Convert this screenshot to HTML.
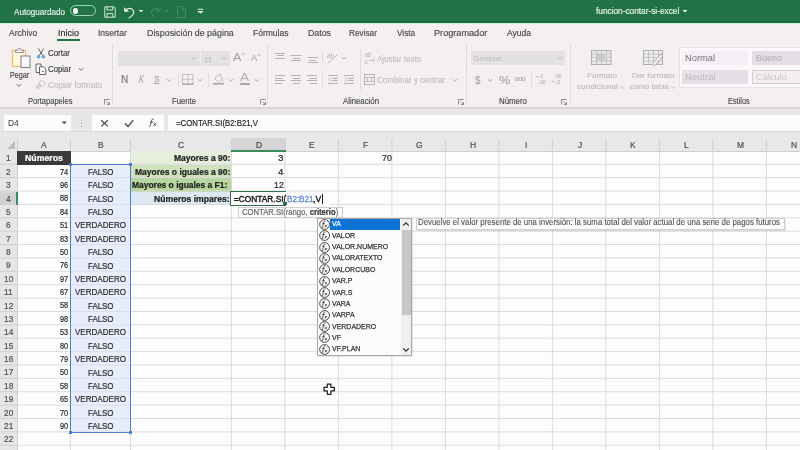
<!DOCTYPE html><html><head><meta charset="utf-8"><style>
*{box-sizing:border-box;margin:0;padding:0}
html,body{width:800px;height:450px;overflow:hidden;background:#fff;font-family:"Liberation Sans",sans-serif;}
.a{position:absolute;white-space:nowrap;overflow:visible}
.t{position:absolute;white-space:nowrap;line-height:1;}
</style></head><body><div id="w" style="position:absolute;left:0;top:0;width:800px;height:450px;overflow:hidden;filter:blur(0.35px)">
<div class="a" style="left:0px;top:0px;width:800px;height:22.6px;background:#217346;"></div>
<div class="a" style="left:0px;top:21.4px;width:800px;height:1.2px;background:#1b6a3e;"></div>
<div class="a" style="left:0px;top:22.6px;width:800px;height:1.1px;background:#c9f5d6;"></div>
<div class="t" style="left:14.00px;top:7.77px;font-size:8.3px;color:#e8f3ec;transform:scaleX(0.9781);transform-origin:0 0;;-webkit-text-stroke:0.15px currentColor;">Autoguardado</div>
<div class="a" style="left:70px;top:5px;width:26px;height:11.2px;border:1.3px solid #9fd6b5;border-radius:6px"></div>
<div class="a" style="left:72.8px;top:8px;width:5.6px;height:5.6px;border-radius:50%;background:#fff"></div>
<svg class="a" style="left:104px;top:6px;" width="12" height="12" viewBox="0 0 12 12"><path d="M0.8 0.8h9.2l1.2 1.2v9.2H0.8z" fill="none" stroke="#cfe8d8" stroke-width="1"/><path d="M3 0.8v3.2h5.8V0.8M3 11.2V7.6h5.8v3.6" fill="none" stroke="#cfe8d8" stroke-width="1"/></svg>
<svg class="a" style="left:123px;top:4.5px;" width="12" height="14" viewBox="0 0 12 14"><path d="M1 2.2L1.3 7 6 6.4z" fill="#e6f2ea"/><path d="M3 5C5 2.8 8.2 2.8 9.8 4.9c1.6 2 0.9 4-0.6 5.4l-3.6 3" fill="none" stroke="#e6f2ea" stroke-width="1.1"/></svg>
<svg class="a" style="left:137.5px;top:9px;" width="6" height="5" viewBox="0 0 6 5"><path d="M0.5 1l2.5 2.3L5.5 1z" fill="#e6f2ea"/></svg>
<svg class="a" style="left:150px;top:5px;" width="12" height="13" viewBox="0 0 12 13"><path d="M10 2v4H6" fill="none" stroke="#3f8a60" stroke-width="1.1"/><path d="M9.7 5.8C8 3 3.5 2.8 2 5.8c-1.2 2.6 0.5 5 3.5 6.8" fill="none" stroke="#3f8a60" stroke-width="1.1"/></svg>
<svg class="a" style="left:164px;top:9px;" width="6" height="5" viewBox="0 0 6 5"><path d="M0.5 1l2.5 2.5L5.5 1z" fill="#3f8a60"/></svg>
<svg class="a" style="left:176px;top:6px;" width="11" height="12" viewBox="0 0 11 12"><path d="M1.5 0.5h5l3 3v8h-8z M6.5 0.5v3h3" fill="none" stroke="#3f8a60" stroke-width="1"/></svg>
<svg class="a" style="left:197px;top:8px;" width="7" height="7" viewBox="0 0 7 7"><path d="M0.8 1.3h5.4" stroke="#e6f2ea" stroke-width="1"/><path d="M0.8 3h5.4v0.8L3.5 5.6 0.8 3.8z" fill="#e6f2ea"/></svg>
<div class="t" style="left:595.70px;top:6.72px;font-size:8.6px;color:#eef6f1;transform:scaleX(0.9635);transform-origin:0 0;;-webkit-text-stroke:0.15px currentColor;">funcion-contar-si-excel</div>
<svg class="a" style="left:682px;top:9px;" width="6" height="5" viewBox="0 0 6 5"><path d="M0.5 1l2.5 2.5L5.5 1z" fill="#e6f2ea"/></svg>
<div class="a" style="left:0px;top:23.7px;width:800px;height:83.3px;background:#f3f0ef;"></div>
<div class="t" style="left:9.30px;top:28.58px;font-size:9px;color:#484848;transform:scaleX(0.9395);transform-origin:0 0;;-webkit-text-stroke:0.15px currentColor;">Archivo</div>
<div class="t" style="left:57.80px;top:28.58px;font-size:9px;color:#2b2b2b;transform:scaleX(0.9993);transform-origin:0 0;;-webkit-text-stroke:0.15px currentColor;">Inicio</div>
<div class="t" style="left:97.70px;top:28.58px;font-size:9px;color:#484848;transform:scaleX(0.9405);transform-origin:0 0;;-webkit-text-stroke:0.15px currentColor;">Insertar</div>
<div class="t" style="left:147.00px;top:28.58px;font-size:9px;color:#484848;transform:scaleX(0.9851);transform-origin:0 0;;-webkit-text-stroke:0.15px currentColor;">Disposición de página</div>
<div class="t" style="left:253.25px;top:28.58px;font-size:9px;color:#484848;transform:scaleX(0.9463);transform-origin:0 0;;-webkit-text-stroke:0.15px currentColor;">Fórmulas</div>
<div class="t" style="left:308.00px;top:28.58px;font-size:9px;color:#484848;transform:scaleX(0.9781);transform-origin:0 0;;-webkit-text-stroke:0.15px currentColor;">Datos</div>
<div class="t" style="left:349.40px;top:28.58px;font-size:9px;color:#484848;transform:scaleX(0.9143);transform-origin:0 0;;-webkit-text-stroke:0.15px currentColor;">Revisar</div>
<div class="t" style="left:396.50px;top:28.58px;font-size:9px;color:#484848;transform:scaleX(0.9164);transform-origin:0 0;;-webkit-text-stroke:0.15px currentColor;">Vista</div>
<div class="t" style="left:434.20px;top:28.58px;font-size:9px;color:#484848;transform:scaleX(1.0146);transform-origin:0 0;;-webkit-text-stroke:0.15px currentColor;">Programador</div>
<div class="t" style="left:506.70px;top:28.58px;font-size:9px;color:#484848;transform:scaleX(0.9464);transform-origin:0 0;;-webkit-text-stroke:0.15px currentColor;">Ayuda</div>
<div class="a" style="left:57.3px;top:39.2px;width:22.4px;height:1.8px;background:#217346;"></div>
<svg class="a" style="left:11px;top:47px;" width="20" height="22" viewBox="0 0 20 22">
<rect x="1.5" y="3.5" width="13" height="16" fill="#fdf5e0" stroke="#ebbd66" stroke-width="1.2"/>
<path d="M4.5 5.5V3.2h2.2a1.8 1.8 0 0 1 3.6 0h2.2v2.3z" fill="#f4f2f2" stroke="#8a8a8a" stroke-width="0.9"/>
<rect x="10" y="9" width="9" height="11.5" fill="#fbf8fb" stroke="#6a6a6a" stroke-width="0.85"/>
</svg>
<div class="t" style="left:9.80px;top:71.09px;font-size:8.4px;color:#444;transform:scaleX(0.8587);transform-origin:0 0;;-webkit-text-stroke:0.15px currentColor;">Pegar</div>
<svg class="a" style="left:16px;top:83px;" width="6" height="5" viewBox="0 0 6 5"><path d="M0.8 1.2l2.2 2.2 2.2-2.2" fill="none" stroke="#555" stroke-width="0.9"/></svg>
<svg class="a" style="left:36px;top:48px;" width="10" height="11" viewBox="0 0 10 11">
<path d="M2.3 0.5l4.6 7.2M7.7 0.5L3.1 7.7" stroke="#555" stroke-width="0.9" fill="none"/>
<circle cx="2.6" cy="8.8" r="1.3" fill="#8fb7e6" stroke="#3d7fcf" stroke-width="0.8"/><circle cx="7.4" cy="8.8" r="1.3" fill="#8fb7e6" stroke="#3d7fcf" stroke-width="0.8"/>
</svg>
<div class="t" style="left:48.00px;top:48.69px;font-size:8.4px;color:#3c3c3c;transform:scaleX(0.9450);transform-origin:0 0;;-webkit-text-stroke:0.15px currentColor;">Cortar</div>
<svg class="a" style="left:35px;top:63px;" width="12" height="12" viewBox="0 0 12 12">
<path d="M1 1h5v8.5H1z" fill="#fbf9fb" stroke="#555" stroke-width="0.9"/>
<path d="M4.5 3.8h4l2.3 2.3v5.4H4.5z" fill="#fbf9fb" stroke="#555" stroke-width="0.9"/>
<path d="M7 8.5h2" stroke="#555" stroke-width="0.8"/>
</svg>
<div class="t" style="left:48.00px;top:65.09px;font-size:8.4px;color:#3c3c3c;transform:scaleX(0.9322);transform-origin:0 0;;-webkit-text-stroke:0.15px currentColor;">Copiar</div>
<svg class="a" style="left:78px;top:67px;" width="6" height="5" viewBox="0 0 6 5"><path d="M0.8 1.2l2.2 2.2 2.2-2.2" fill="none" stroke="#555" stroke-width="0.9"/></svg>
<svg class="a" style="left:35px;top:79px;" width="12" height="11" viewBox="0 0 12 11">
<path d="M6.5 1l4 3.5-3 3L4 4z" fill="none" stroke="#c8c6c8" stroke-width="1"/>
<path d="M4 4.5L1 8l2 2 3.5-3" fill="#d8d6d8" stroke="#c8c6c8" stroke-width="0.8"/>
</svg>
<div class="t" style="left:48.00px;top:80.69px;font-size:8.4px;color:#c2c0c2;transform:scaleX(0.9749);transform-origin:0 0;;-webkit-text-stroke:0.15px currentColor;">Copiar formato</div>
<div class="t" style="left:28.10px;top:98.36px;font-size:8.2px;color:#4a4a4a;transform:scaleX(0.9202);transform-origin:0 0;;-webkit-text-stroke:0.15px currentColor;">Portapapeles</div>
<svg class="a" style="left:103.5px;top:98.5px;" width="7" height="6" viewBox="0 0 7 6"><path d="M0.5 5.5V0.5h5" fill="none" stroke="#777" stroke-width="0.8"/><path d="M2.5 2.5l3 3M3 5.5h2.5V3" fill="none" stroke="#777" stroke-width="0.8"/></svg>
<div class="a" style="left:111.5px;top:44px;width:1px;height:60px;background:#dedcde;"></div>
<div class="a" style="left:117.6px;top:51px;width:82px;height:15px;background:#e3e1e3;"></div>
<div class="a" style="left:201px;top:51px;width:28.6px;height:15px;background:#e3e1e3;"></div>
<svg class="a" style="left:191px;top:56px;" width="6" height="5" viewBox="0 0 6 5"><path d="M0.8 1.2l2.2 2.2 2.2-2.2" fill="none" stroke="#aaa" stroke-width="0.9"/></svg>
<svg class="a" style="left:221px;top:56px;" width="6" height="5" viewBox="0 0 6 5"><path d="M0.8 1.2l2.2 2.2 2.2-2.2" fill="none" stroke="#aaa" stroke-width="0.9"/></svg>
<div class="t" style="left:204.00px;top:55.73px;font-size:8px;color:#c0bec0;;-webkit-text-stroke:0.15px currentColor;">11</div>
<div class="t" style="left:233.40px;top:52.29px;font-size:11px;color:#a3a1a3;transform:scaleX(1.1438);transform-origin:0 0;-webkit-text-stroke:0">A</div>
<svg class="a" style="left:241px;top:52px;" width="5" height="4" viewBox="0 0 5 4"><path d="M0.6 2.8L2.2 1.2 3.8 2.8" fill="none" stroke="#a3a1a3" stroke-width="0.8"/></svg>
<div class="t" style="left:251.20px;top:54.40px;font-size:8.5px;color:#a3a1a3;transform:scaleX(1.0931);transform-origin:0 0;-webkit-text-stroke:0">A</div>
<svg class="a" style="left:256.5px;top:53px;" width="5" height="4" viewBox="0 0 5 4"><path d="M0.6 1.2L2.2 2.8 3.8 1.2" fill="none" stroke="#a3a1a3" stroke-width="0.8"/></svg>
<div class="t" style="left:121.00px;top:74.53px;font-size:10px;color:#9a989a;font-weight:700;transform:scaleX(1.0229);transform-origin:0 0;;-webkit-text-stroke:0.15px currentColor;">N</div>
<div class="t" style="left:138.50px;top:74.53px;font-size:10px;color:#a8a6a8;transform:scaleX(0.7494);transform-origin:0 0;font-style:italic;-webkit-text-stroke:0.15px currentColor;">K</div>
<div class="t" style="left:154.30px;top:73.96px;font-size:9.5px;color:#a8a6a8;transform:scaleX(0.8670);transform-origin:0 0;text-decoration:underline;-webkit-text-stroke:0.15px currentColor;">S</div>
<svg class="a" style="left:165.5px;top:77.5px;" width="6" height="5" viewBox="0 0 6 5"><path d="M0.8 1.2l2.2 2.2 2.2-2.2" fill="none" stroke="#a5a3a5" stroke-width="0.9"/></svg>
<div class="a" style="left:177.5px;top:73px;width:1px;height:14px;background:#dedcde;"></div>
<svg class="a" style="left:182px;top:74px;" width="12" height="11" viewBox="0 0 12 11"><rect x="0.5" y="0.5" width="10.5" height="9.5" fill="none" stroke="#bdbbbd" stroke-width="0.9"/><path d="M5.75 0.5v9.5M0.5 5.25h10.5" stroke="#bdbbbd" stroke-width="0.8"/><path d="M0 10.2h11.5" stroke="#a9a7a9" stroke-width="1.3"/></svg>
<svg class="a" style="left:196.5px;top:77.5px;" width="6" height="5" viewBox="0 0 6 5"><path d="M0.8 1.2l2.2 2.2 2.2-2.2" fill="none" stroke="#a5a3a5" stroke-width="0.9"/></svg>
<div class="a" style="left:208px;top:73px;width:1px;height:14px;background:#dedcde;"></div>
<svg class="a" style="left:212px;top:72px;" width="13" height="13" viewBox="0 0 13 13"><path d="M2.5 6.5l4-4.2 4.2 4.2-4 4z" fill="none" stroke="#b3b1b3" stroke-width="0.9"/><path d="M8 1.5l1.5 2M10.5 7.5q1 1.5 0.5 2.2" fill="none" stroke="#b3b1b3" stroke-width="0.8"/><path d="M1 11.8h11" stroke="#aaa8aa" stroke-width="1.6"/></svg>
<svg class="a" style="left:227.5px;top:77.5px;" width="6" height="5" viewBox="0 0 6 5"><path d="M0.8 1.2l2.2 2.2 2.2-2.2" fill="none" stroke="#a5a3a5" stroke-width="0.9"/></svg>
<div class="t" style="left:240.20px;top:73.03px;font-size:10px;color:#b0aeb0;transform:scaleX(1.3489);transform-origin:0 0;-webkit-text-stroke:0">A</div>
<div class="a" style="left:239.5px;top:83px;width:10.5px;height:1.6px;background:#aaa8aa;"></div>
<svg class="a" style="left:253.5px;top:77.5px;" width="6" height="5" viewBox="0 0 6 5"><path d="M0.8 1.2l2.2 2.2 2.2-2.2" fill="none" stroke="#a5a3a5" stroke-width="0.9"/></svg>
<div class="t" style="left:171.60px;top:98.36px;font-size:8.2px;color:#4a4a4a;transform:scaleX(0.9412);transform-origin:0 0;;-webkit-text-stroke:0.15px currentColor;">Fuente</div>
<svg class="a" style="left:259.5px;top:98.5px;" width="7" height="6" viewBox="0 0 7 6"><path d="M0.5 5.5V0.5h5" fill="none" stroke="#777" stroke-width="0.8"/><path d="M2.5 2.5l3 3M3 5.5h2.5V3" fill="none" stroke="#777" stroke-width="0.8"/></svg>
<div class="a" style="left:266.5px;top:44px;width:1px;height:60px;background:#dedcde;"></div>
<div class="a" style="left:275px;top:52.5px;width:10px;height:1px;background:#b3b1b3;"></div>
<div class="a" style="left:276.5px;top:55.0px;width:7px;height:1px;background:#b3b1b3;"></div>
<div class="a" style="left:275px;top:57.5px;width:10px;height:1px;background:#b3b1b3;"></div>
<div class="a" style="left:291px;top:55px;width:10px;height:1px;background:#b3b1b3;"></div>
<div class="a" style="left:292.5px;top:57.5px;width:7px;height:1px;background:#b3b1b3;"></div>
<div class="a" style="left:291px;top:60px;width:10px;height:1px;background:#b3b1b3;"></div>
<div class="a" style="left:307.5px;top:57.3px;width:10px;height:1px;background:#b3b1b3;"></div>
<div class="a" style="left:309.0px;top:59.8px;width:7px;height:1px;background:#b3b1b3;"></div>
<div class="a" style="left:307.5px;top:62.3px;width:10px;height:1px;background:#b3b1b3;"></div>
<div class="a" style="left:321.8px;top:50px;width:1px;height:16px;background:#dedcde;"></div>
<svg class="a" style="left:326px;top:51px;" width="14" height="13" viewBox="0 0 14 13"><text x="1" y="7" font-size="6.5" fill="#b3b1b3" font-family="Liberation Sans">ab</text><path d="M2 12l9-8" stroke="#b3b1b3" stroke-width="0.9"/></svg>
<svg class="a" style="left:341px;top:55.5px;" width="6" height="5" viewBox="0 0 6 5"><path d="M0.8 1.2l2.2 2.2 2.2-2.2" fill="none" stroke="#a5a3a5" stroke-width="0.9"/></svg>
<div class="a" style="left:275px;top:75px;width:10px;height:1px;background:#b3b1b3;"></div>
<div class="a" style="left:275px;top:77.5px;width:7px;height:1px;background:#b3b1b3;"></div>
<div class="a" style="left:275px;top:80px;width:10px;height:1px;background:#b3b1b3;"></div>
<div class="a" style="left:275px;top:82.5px;width:7px;height:1px;background:#b3b1b3;"></div>
<div class="a" style="left:291px;top:75px;width:10px;height:1px;background:#b3b1b3;"></div>
<div class="a" style="left:292.5px;top:77.5px;width:7px;height:1px;background:#b3b1b3;"></div>
<div class="a" style="left:291px;top:80px;width:10px;height:1px;background:#b3b1b3;"></div>
<div class="a" style="left:292.5px;top:82.5px;width:7px;height:1px;background:#b3b1b3;"></div>
<div class="a" style="left:307px;top:75px;width:10px;height:1px;background:#b3b1b3;"></div>
<div class="a" style="left:310px;top:77.5px;width:7px;height:1px;background:#b3b1b3;"></div>
<div class="a" style="left:307px;top:80px;width:10px;height:1px;background:#b3b1b3;"></div>
<div class="a" style="left:310px;top:82.5px;width:7px;height:1px;background:#b3b1b3;"></div>
<div class="a" style="left:321.8px;top:73px;width:1px;height:14px;background:#dedcde;"></div>
<div class="a" style="left:328px;top:75px;width:10px;height:1px;background:#b3b1b3;"></div>
<div class="a" style="left:331.5px;top:77.5px;width:6.5px;height:1px;background:#b3b1b3;"></div>
<div class="a" style="left:331.5px;top:80px;width:6.5px;height:1px;background:#b3b1b3;"></div>
<div class="a" style="left:328px;top:82.5px;width:10px;height:1px;background:#b3b1b3;"></div>
<svg class="a" style="left:328px;top:76.5px;" width="4" height="5" viewBox="0 0 4 5"><path d="M3 0.5L0.5 2.5 3 4.5" fill="none" stroke="#b3b1b3" stroke-width="0.8"/></svg>
<div class="a" style="left:344px;top:75px;width:10px;height:1px;background:#b3b1b3;"></div>
<div class="a" style="left:347.5px;top:77.5px;width:6.5px;height:1px;background:#b3b1b3;"></div>
<div class="a" style="left:347.5px;top:80px;width:6.5px;height:1px;background:#b3b1b3;"></div>
<div class="a" style="left:344px;top:82.5px;width:10px;height:1px;background:#b3b1b3;"></div>
<svg class="a" style="left:344px;top:76.5px;" width="4" height="5" viewBox="0 0 4 5"><path d="M0.5 0.5L3 2.5 0.5 4.5" fill="none" stroke="#b3b1b3" stroke-width="0.8"/></svg>
<div class="a" style="left:360px;top:50px;width:1px;height:40px;background:#dedcde;"></div>
<svg class="a" style="left:364px;top:51px;" width="13" height="14" viewBox="0 0 13 14"><text x="0.5" y="6" font-size="6.5" fill="#b3b1b3" font-family="Liberation Sans">ab</text><text x="0.5" y="12.5" font-size="6.5" fill="#b3b1b3" font-family="Liberation Sans">c</text><path d="M5 9.5h4.5v-2M11 9.5l-1.5 1.5" fill="none" stroke="#b3b1b3" stroke-width="0.8"/></svg>
<div class="t" style="left:377.00px;top:54.89px;font-size:8.4px;color:#c0bec0;transform:scaleX(0.9450);transform-origin:0 0;;-webkit-text-stroke:0.15px currentColor;">Ajustar texto</div>
<svg class="a" style="left:364px;top:74px;" width="11" height="11" viewBox="0 0 11 11"><rect x="0.5" y="0.5" width="10" height="10" fill="none" stroke="#b3b1b3" stroke-width="0.9"/><path d="M0.5 3.5h10M0.5 7.5h10M3.5 3.5v4M7.5 3.5v4" stroke="#b3b1b3" stroke-width="0.8"/></svg>
<div class="t" style="left:377.00px;top:75.89px;font-size:8.4px;color:#c0bec0;transform:scaleX(0.9548);transform-origin:0 0;;-webkit-text-stroke:0.15px currentColor;">Combinar y centrar</div>
<svg class="a" style="left:451.5px;top:78px;" width="6" height="5" viewBox="0 0 6 5"><path d="M0.8 1.2l2.2 2.2 2.2-2.2" fill="none" stroke="#a5a3a5" stroke-width="0.9"/></svg>
<div class="t" style="left:343.00px;top:98.36px;font-size:8.2px;color:#4a4a4a;transform:scaleX(0.9529);transform-origin:0 0;;-webkit-text-stroke:0.15px currentColor;">Alineación</div>
<svg class="a" style="left:458px;top:98.5px;" width="7" height="6" viewBox="0 0 7 6"><path d="M0.5 5.5V0.5h5" fill="none" stroke="#777" stroke-width="0.8"/><path d="M2.5 2.5l3 3M3 5.5h2.5V3" fill="none" stroke="#777" stroke-width="0.8"/></svg>
<div class="a" style="left:465.5px;top:44px;width:1px;height:60px;background:#dedcde;"></div>
<div class="a" style="left:471px;top:51.4px;width:93.6px;height:14.1px;background:#e3e1e3;"></div>
<div class="t" style="left:473.50px;top:54.90px;font-size:7.8px;color:#c2c0c2;;-webkit-text-stroke:0.15px currentColor;">General</div>
<svg class="a" style="left:557px;top:56px;" width="6" height="5" viewBox="0 0 6 5"><path d="M0.8 1.2l2.2 2.2 2.2-2.2" fill="none" stroke="#bbb" stroke-width="0.9"/></svg>
<div class="t" style="left:475.40px;top:75.31px;font-size:10.5px;color:#a8a6a8;transform:scaleX(0.9241);transform-origin:0 0;;-webkit-text-stroke:0.15px currentColor;">$</div>
<svg class="a" style="left:487px;top:77.5px;" width="6" height="5" viewBox="0 0 6 5"><path d="M0.8 1.2l2.2 2.2 2.2-2.2" fill="none" stroke="#a5a3a5" stroke-width="0.9"/></svg>
<div class="t" style="left:498.50px;top:75.11px;font-size:10.5px;color:#a8a6a8;transform:scaleX(1.1987);transform-origin:0 0;;-webkit-text-stroke:0.15px currentColor;">%</div>
<div class="t" style="left:515.00px;top:76.42px;font-size:6px;color:#a8a6a8;transform:scaleX(1.0583);transform-origin:0 0;;-webkit-text-stroke:0.15px currentColor;">000</div>
<div class="a" style="left:530.5px;top:73px;width:1px;height:14px;background:#dedcde;"></div>
<svg class="a" style="left:535px;top:73px;" width="13" height="12" viewBox="0 0 13 12"><text x="4" y="5" font-size="5" fill="#a8a6a8" font-family="Liberation Sans">,0</text><text x="3.5" y="11" font-size="5" fill="#a8a6a8" font-family="Liberation Sans">,00</text><path d="M0.5 3.5h3" stroke="#a8a6a8" stroke-width="0.7"/></svg>
<svg class="a" style="left:551px;top:73px;" width="13" height="12" viewBox="0 0 13 12"><text x="3.5" y="5" font-size="5" fill="#a8a6a8" font-family="Liberation Sans">,00</text><text x="5" y="11" font-size="5" fill="#a8a6a8" font-family="Liberation Sans">,0</text><path d="M0.5 8.5h3.5" stroke="#a8a6a8" stroke-width="0.7"/></svg>
<div class="t" style="left:498.50px;top:98.36px;font-size:8.2px;color:#4a4a4a;transform:scaleX(0.9614);transform-origin:0 0;;-webkit-text-stroke:0.15px currentColor;">Número</div>
<svg class="a" style="left:561px;top:98.5px;" width="7" height="6" viewBox="0 0 7 6"><path d="M0.5 5.5V0.5h5" fill="none" stroke="#777" stroke-width="0.8"/><path d="M2.5 2.5l3 3M3 5.5h2.5V3" fill="none" stroke="#777" stroke-width="0.8"/></svg>
<div class="a" style="left:569.5px;top:44px;width:1px;height:60px;background:#dedcde;"></div>
<svg class="a" style="left:591px;top:50px;" width="21" height="15" viewBox="0 0 21 15"><rect x="0.5" y="0.5" width="19.5" height="14" fill="#e9e7e9" stroke="#a8a6a8" stroke-width="0.9"/><path d="M0.5 4h19.5M0.5 7.5h19.5M0.5 11h19.5M5.5 0.5v14M10.5 0.5v14M15.5 0.5v14" stroke="#b8b6b8" stroke-width="0.7"/><rect x="6" y="4.5" width="8" height="6" fill="#c9c7c9"/></svg>
<div class="t" style="left:586.50px;top:72.23px;font-size:8px;color:#bdbbbd;transform:scaleX(1.0102);transform-origin:0 0;;-webkit-text-stroke:0.15px currentColor;">Formato</div>
<div class="t" style="left:576.60px;top:82.73px;font-size:8px;color:#bdbbbd;transform:scaleX(1.0217);transform-origin:0 0;;-webkit-text-stroke:0.15px currentColor;">condicional</div>
<svg class="a" style="left:619px;top:85px;" width="6" height="5" viewBox="0 0 6 5"><path d="M0.8 1.2l2.2 2.2 2.2-2.2" fill="none" stroke="#bdbbbd" stroke-width="0.9"/></svg>
<svg class="a" style="left:643px;top:50px;" width="22" height="16" viewBox="0 0 22 16"><rect x="0.5" y="0.5" width="19" height="14" fill="#efedef" stroke="#a8a6a8" stroke-width="0.9"/><path d="M0.5 4h19M0.5 7.5h19M0.5 11h19M5.5 0.5v14M10.5 0.5v14M15.5 0.5v14" stroke="#b8b6b8" stroke-width="0.7"/><path d="M9 14l9-10 2 2-9 10z" fill="#f3f1f3" stroke="#a8a6a8" stroke-width="0.9"/></svg>
<div class="t" style="left:631.60px;top:72.23px;font-size:8px;color:#bdbbbd;transform:scaleX(1.0039);transform-origin:0 0;;-webkit-text-stroke:0.15px currentColor;">Dar formato</div>
<div class="t" style="left:629.80px;top:82.73px;font-size:8px;color:#bdbbbd;transform:scaleX(0.9887);transform-origin:0 0;;-webkit-text-stroke:0.15px currentColor;">como tabla</div>
<svg class="a" style="left:670px;top:85px;" width="6" height="5" viewBox="0 0 6 5"><path d="M0.8 1.2l2.2 2.2 2.2-2.2" fill="none" stroke="#bdbbbd" stroke-width="0.9"/></svg>
<div class="a" style="left:679px;top:47.4px;width:130px;height:40.2px;background:#fbf9fb;border:1px solid #e4e2e4"></div>
<div class="a" style="left:682px;top:51px;width:66.4px;height:14.4px;background:#f5eff5;"></div>
<div class="a" style="left:752px;top:51px;width:60px;height:14.4px;background:#e3dee3;"></div>
<div class="a" style="left:682px;top:69.8px;width:66.4px;height:14px;background:#e5e0e5;"></div>
<div class="a" style="left:752px;top:69.8px;width:60px;height:14px;background:#f2eef2;border:1px solid #d0ccd0"></div>
<div class="t" style="left:685.00px;top:54.35px;font-size:8.8px;color:#747274;transform:scaleX(1.0579);transform-origin:0 0;-webkit-text-stroke:0">Normal</div>
<div class="t" style="left:755.50px;top:54.35px;font-size:8.8px;color:#aeacae;transform:scaleX(1.0221);transform-origin:0 0;-webkit-text-stroke:0">Bueno</div>
<div class="t" style="left:685.00px;top:72.85px;font-size:8.8px;color:#bdbbbd;transform:scaleX(1.0755);transform-origin:0 0;-webkit-text-stroke:0">Neutral</div>
<div class="t" style="left:755.50px;top:72.85px;font-size:8.8px;color:#c8c6c8;transform:scaleX(1.0564);transform-origin:0 0;-webkit-text-stroke:0">Cálculo</div>
<div class="t" style="left:728.30px;top:98.36px;font-size:8.2px;color:#4a4a4a;transform:scaleX(0.8995);transform-origin:0 0;;-webkit-text-stroke:0.15px currentColor;">Estilos</div>
<div class="a" style="left:0px;top:106.5px;width:800px;height:32px;background:#e8e6e8;"></div>
<div class="a" style="left:0px;top:106.5px;width:800px;height:2.2px;background:#d9d7d9;"></div>
<div class="a" style="left:3.75px;top:115px;width:67.5px;height:16px;background:#fdfcfd;"></div>
<div class="t" style="left:8.00px;top:118.51px;font-size:9.2px;color:#444444;transform:scaleX(0.9191);transform-origin:0 0;-webkit-text-stroke:0.05px currentColor">D4</div>
<svg class="a" style="left:61px;top:121px;" width="7" height="4" viewBox="0 0 7 4"><path d="M0.5 0.5h5.5L3.25 3.3z" fill="#555"/></svg>
<div class="a" style="left:81.2px;top:119.5px;width:1.2px;height:1.5px;background:#a8a6a8;"></div>
<div class="a" style="left:81.2px;top:122.5px;width:1.2px;height:1.5px;background:#a8a6a8;"></div>
<div class="a" style="left:81.2px;top:125.5px;width:1.2px;height:1.5px;background:#a8a6a8;"></div>
<div class="a" style="left:92.2px;top:115.3px;width:71.8px;height:15.7px;background:#fdfcfd;"></div>
<svg class="a" style="left:100px;top:119px;" width="9" height="9" viewBox="0 0 9 9"><path d="M1.2 1.2l6.6 6.2M7.8 1.2L1.2 7.4" stroke="#4a4a4a" stroke-width="1.25"/></svg>
<svg class="a" style="left:123.5px;top:119px;" width="10" height="9" viewBox="0 0 10 9"><path d="M1 4.5l3 3L9.3 1.2" fill="none" stroke="#4a4a4a" stroke-width="1.35"/></svg>
<svg class="a" style="left:148px;top:118px;" width="10" height="10" viewBox="0 0 10 10"><path d="M5.6 1.3c-0.9-0.4-1.7 0-2 1L2.4 7.6c-0.3 0.9-0.8 1.2-1.6 1M2 4h2.8" fill="none" stroke="#4a4a4a" stroke-width="0.95"/><path d="M5.3 4.6l2.8 3.6M8.1 4.6L5.3 8.2" fill="none" stroke="#4a4a4a" stroke-width="0.85"/></svg>
<div class="a" style="left:168px;top:115px;width:640px;height:15.5px;background:#fdfcfd;"></div>
<div class="t" style="left:175.50px;top:118.58px;font-size:9px;color:#2a2a2a;transform:scaleX(0.8666);transform-origin:0 0;;-webkit-text-stroke:0.22px currentColor;">=CONTAR.SI(B2:B21,V</div>
<div class="a" style="left:0px;top:138px;width:800px;height:312px;background:#fefdfe;"></div>
<div class="a" style="left:0px;top:131px;width:800px;height:20px;background:#e9e7e9;"></div>
<div class="a" style="left:0px;top:130.5px;width:800px;height:1px;background:#dcdadc;"></div>
<div class="a" style="left:0px;top:151px;width:800px;height:1px;background:#cfcdcf;"></div>
<div class="a" style="left:0px;top:138px;width:17px;height:312px;background:#e7e5e7;"></div>
<div class="a" style="left:17px;top:139px;width:1px;height:311px;background:#cfcdcf;"></div>
<svg class="a" style="left:6px;top:140px;" width="10" height="10" viewBox="0 0 10 10"><path d="M9 1V9H1z" fill="#bfbdbf"/></svg>
<div class="a" style="left:131.00px;top:151.40px;width:100.90px;height:13.38px;background:#e6efdc;"></div>
<div class="a" style="left:131.00px;top:164.78px;width:100.90px;height:13.38px;background:#cde2bd;"></div>
<div class="a" style="left:131.00px;top:178.16px;width:100.90px;height:13.38px;background:#b6d69e;"></div>
<div class="a" style="left:131.00px;top:191.54px;width:100.90px;height:13.38px;background:#dde8f3;"></div>
<svg class="a" style="left:0;top:0" width="800" height="450"><path d="M17.5 164.28H800" stroke="#dddadd" stroke-width="1"/><path d="M0 164.28H17" stroke="#d0ced0" stroke-width="1"/><path d="M17.5 177.66H800" stroke="#dddadd" stroke-width="1"/><path d="M0 177.66H17" stroke="#d0ced0" stroke-width="1"/><path d="M17.5 191.04H800" stroke="#dddadd" stroke-width="1"/><path d="M0 191.04H17" stroke="#d0ced0" stroke-width="1"/><path d="M17.5 204.42H800" stroke="#dddadd" stroke-width="1"/><path d="M0 204.42H17" stroke="#d0ced0" stroke-width="1"/><path d="M17.5 217.80H800" stroke="#dddadd" stroke-width="1"/><path d="M0 217.80H17" stroke="#d0ced0" stroke-width="1"/><path d="M17.5 231.18H800" stroke="#dddadd" stroke-width="1"/><path d="M0 231.18H17" stroke="#d0ced0" stroke-width="1"/><path d="M17.5 244.56H800" stroke="#dddadd" stroke-width="1"/><path d="M0 244.56H17" stroke="#d0ced0" stroke-width="1"/><path d="M17.5 257.94H800" stroke="#dddadd" stroke-width="1"/><path d="M0 257.94H17" stroke="#d0ced0" stroke-width="1"/><path d="M17.5 271.32H800" stroke="#dddadd" stroke-width="1"/><path d="M0 271.32H17" stroke="#d0ced0" stroke-width="1"/><path d="M17.5 284.70H800" stroke="#dddadd" stroke-width="1"/><path d="M0 284.70H17" stroke="#d0ced0" stroke-width="1"/><path d="M17.5 298.08H800" stroke="#dddadd" stroke-width="1"/><path d="M0 298.08H17" stroke="#d0ced0" stroke-width="1"/><path d="M17.5 311.46H800" stroke="#dddadd" stroke-width="1"/><path d="M0 311.46H17" stroke="#d0ced0" stroke-width="1"/><path d="M17.5 324.84H800" stroke="#dddadd" stroke-width="1"/><path d="M0 324.84H17" stroke="#d0ced0" stroke-width="1"/><path d="M17.5 338.22H800" stroke="#dddadd" stroke-width="1"/><path d="M0 338.22H17" stroke="#d0ced0" stroke-width="1"/><path d="M17.5 351.60H800" stroke="#dddadd" stroke-width="1"/><path d="M0 351.60H17" stroke="#d0ced0" stroke-width="1"/><path d="M17.5 364.98H800" stroke="#dddadd" stroke-width="1"/><path d="M0 364.98H17" stroke="#d0ced0" stroke-width="1"/><path d="M17.5 378.36H800" stroke="#dddadd" stroke-width="1"/><path d="M0 378.36H17" stroke="#d0ced0" stroke-width="1"/><path d="M17.5 391.74H800" stroke="#dddadd" stroke-width="1"/><path d="M0 391.74H17" stroke="#d0ced0" stroke-width="1"/><path d="M17.5 405.12H800" stroke="#dddadd" stroke-width="1"/><path d="M0 405.12H17" stroke="#d0ced0" stroke-width="1"/><path d="M17.5 418.50H800" stroke="#dddadd" stroke-width="1"/><path d="M0 418.50H17" stroke="#d0ced0" stroke-width="1"/><path d="M17.5 431.88H800" stroke="#dddadd" stroke-width="1"/><path d="M0 431.88H17" stroke="#d0ced0" stroke-width="1"/><path d="M17.5 445.26H800" stroke="#dddadd" stroke-width="1"/><path d="M0 445.26H17" stroke="#d0ced0" stroke-width="1"/><path d="M70.40 151V450" stroke="#dddadd" stroke-width="1"/><path d="M70.40 139V151" stroke="#d0ced0" stroke-width="1"/><path d="M130.50 151V450" stroke="#dddadd" stroke-width="1"/><path d="M130.50 139V151" stroke="#d0ced0" stroke-width="1"/><path d="M231.40 151V450" stroke="#dddadd" stroke-width="1"/><path d="M231.40 139V151" stroke="#d0ced0" stroke-width="1"/><path d="M284.90 151V450" stroke="#dddadd" stroke-width="1"/><path d="M284.90 139V151" stroke="#d0ced0" stroke-width="1"/><path d="M338.40 151V450" stroke="#dddadd" stroke-width="1"/><path d="M338.40 139V151" stroke="#d0ced0" stroke-width="1"/><path d="M391.90 151V450" stroke="#dddadd" stroke-width="1"/><path d="M391.90 139V151" stroke="#d0ced0" stroke-width="1"/><path d="M445.40 151V450" stroke="#dddadd" stroke-width="1"/><path d="M445.40 139V151" stroke="#d0ced0" stroke-width="1"/><path d="M498.90 151V450" stroke="#dddadd" stroke-width="1"/><path d="M498.90 139V151" stroke="#d0ced0" stroke-width="1"/><path d="M552.40 151V450" stroke="#dddadd" stroke-width="1"/><path d="M552.40 139V151" stroke="#d0ced0" stroke-width="1"/><path d="M605.90 151V450" stroke="#dddadd" stroke-width="1"/><path d="M605.90 139V151" stroke="#d0ced0" stroke-width="1"/><path d="M659.40 151V450" stroke="#dddadd" stroke-width="1"/><path d="M659.40 139V151" stroke="#d0ced0" stroke-width="1"/><path d="M712.90 151V450" stroke="#dddadd" stroke-width="1"/><path d="M712.90 139V151" stroke="#d0ced0" stroke-width="1"/><path d="M766.40 151V450" stroke="#dddadd" stroke-width="1"/><path d="M766.40 139V151" stroke="#d0ced0" stroke-width="1"/><path d="M819.90 151V450" stroke="#dddadd" stroke-width="1"/><path d="M819.90 139V151" stroke="#d0ced0" stroke-width="1"/></svg>
<div class="a" style="left:70.7px;top:164.78px;width:59.6px;height:267.60px;background:rgba(212,224,246,0.55)"></div>
<div class="a" style="left:17.00px;top:151.40px;width:53.90px;height:13.38px;background:#3b3939;"></div>
<div class="a" style="left:231.4px;top:138px;width:54.2px;height:12.5px;background:#d5d3d5;"></div>
<div class="a" style="left:230.9px;top:150px;width:55px;height:1.6px;background:#3b8a5d;"></div>
<div class="a" style="left:0;top:191.54px;width:17px;height:13.38px;background:#d3d1d3"></div>
<div class="a" style="left:16px;top:191.54px;width:1.5px;height:13.38px;background:#3b8a5d"></div>
<div class="t" style="left:41.13px;top:139.94px;font-size:9.4px;color:#505050;transform:scaleX(0.9000);transform-origin:0 0;;-webkit-text-stroke:0.22px currentColor;">A</div>
<div class="t" style="left:98.13px;top:139.94px;font-size:9.4px;color:#505050;transform:scaleX(0.9000);transform-origin:0 0;;-webkit-text-stroke:0.22px currentColor;">B</div>
<div class="t" style="left:178.40px;top:139.94px;font-size:9.4px;color:#505050;transform:scaleX(0.9000);transform-origin:0 0;;-webkit-text-stroke:0.22px currentColor;">C</div>
<div class="t" style="left:255.60px;top:139.94px;font-size:9.4px;color:#444444;transform:scaleX(0.9000);transform-origin:0 0;;-webkit-text-stroke:0.22px currentColor;">D</div>
<div class="t" style="left:309.33px;top:139.94px;font-size:9.4px;color:#505050;transform:scaleX(0.9000);transform-origin:0 0;;-webkit-text-stroke:0.22px currentColor;">E</div>
<div class="t" style="left:363.07px;top:139.94px;font-size:9.4px;color:#505050;transform:scaleX(0.9000);transform-origin:0 0;;-webkit-text-stroke:0.22px currentColor;">F</div>
<div class="t" style="left:415.87px;top:139.94px;font-size:9.4px;color:#505050;transform:scaleX(0.9000);transform-origin:0 0;;-webkit-text-stroke:0.22px currentColor;">G</div>
<div class="t" style="left:469.60px;top:139.94px;font-size:9.4px;color:#505050;transform:scaleX(0.9000);transform-origin:0 0;;-webkit-text-stroke:0.22px currentColor;">H</div>
<div class="t" style="left:524.98px;top:139.94px;font-size:9.4px;color:#505050;transform:scaleX(0.9000);transform-origin:0 0;;-webkit-text-stroke:0.22px currentColor;">I</div>
<div class="t" style="left:577.54px;top:139.94px;font-size:9.4px;color:#505050;transform:scaleX(0.9000);transform-origin:0 0;;-webkit-text-stroke:0.22px currentColor;">J</div>
<div class="t" style="left:630.33px;top:139.94px;font-size:9.4px;color:#505050;transform:scaleX(0.9000);transform-origin:0 0;;-webkit-text-stroke:0.22px currentColor;">K</div>
<div class="t" style="left:684.30px;top:139.94px;font-size:9.4px;color:#505050;transform:scaleX(0.9000);transform-origin:0 0;;-webkit-text-stroke:0.22px currentColor;">L</div>
<div class="t" style="left:736.63px;top:139.94px;font-size:9.4px;color:#505050;transform:scaleX(0.9000);transform-origin:0 0;;-webkit-text-stroke:0.22px currentColor;">M</div>
<div class="t" style="left:790.60px;top:139.94px;font-size:9.4px;color:#505050;transform:scaleX(0.9000);transform-origin:0 0;;-webkit-text-stroke:0.22px currentColor;">N</div>
<div class="t" style="left:6.28px;top:153.40px;font-size:9.8px;color:#505050;transform:scaleX(0.8500);transform-origin:0 0;;-webkit-text-stroke:0.22px currentColor;">1</div>
<div class="t" style="left:6.28px;top:166.78px;font-size:9.8px;color:#505050;transform:scaleX(0.8500);transform-origin:0 0;;-webkit-text-stroke:0.22px currentColor;">2</div>
<div class="t" style="left:6.28px;top:180.16px;font-size:9.8px;color:#505050;transform:scaleX(0.8500);transform-origin:0 0;;-webkit-text-stroke:0.22px currentColor;">3</div>
<div class="t" style="left:6.28px;top:193.54px;font-size:9.8px;color:#505050;transform:scaleX(0.8500);transform-origin:0 0;;-webkit-text-stroke:0.22px currentColor;">4</div>
<div class="t" style="left:6.28px;top:206.92px;font-size:9.8px;color:#505050;transform:scaleX(0.8500);transform-origin:0 0;;-webkit-text-stroke:0.22px currentColor;">5</div>
<div class="t" style="left:6.28px;top:220.30px;font-size:9.8px;color:#505050;transform:scaleX(0.8500);transform-origin:0 0;;-webkit-text-stroke:0.22px currentColor;">6</div>
<div class="t" style="left:6.28px;top:233.68px;font-size:9.8px;color:#505050;transform:scaleX(0.8500);transform-origin:0 0;;-webkit-text-stroke:0.22px currentColor;">7</div>
<div class="t" style="left:6.28px;top:247.06px;font-size:9.8px;color:#505050;transform:scaleX(0.8500);transform-origin:0 0;;-webkit-text-stroke:0.22px currentColor;">8</div>
<div class="t" style="left:6.28px;top:260.44px;font-size:9.8px;color:#505050;transform:scaleX(0.8500);transform-origin:0 0;;-webkit-text-stroke:0.22px currentColor;">9</div>
<div class="t" style="left:3.96px;top:273.82px;font-size:9.8px;color:#505050;transform:scaleX(0.8500);transform-origin:0 0;;-webkit-text-stroke:0.22px currentColor;">10</div>
<div class="t" style="left:4.28px;top:287.20px;font-size:9.8px;color:#505050;transform:scaleX(0.8500);transform-origin:0 0;;-webkit-text-stroke:0.22px currentColor;">11</div>
<div class="t" style="left:3.96px;top:300.58px;font-size:9.8px;color:#505050;transform:scaleX(0.8500);transform-origin:0 0;;-webkit-text-stroke:0.22px currentColor;">12</div>
<div class="t" style="left:3.96px;top:313.96px;font-size:9.8px;color:#505050;transform:scaleX(0.8500);transform-origin:0 0;;-webkit-text-stroke:0.22px currentColor;">13</div>
<div class="t" style="left:3.96px;top:327.34px;font-size:9.8px;color:#505050;transform:scaleX(0.8500);transform-origin:0 0;;-webkit-text-stroke:0.22px currentColor;">14</div>
<div class="t" style="left:3.96px;top:340.72px;font-size:9.8px;color:#505050;transform:scaleX(0.8500);transform-origin:0 0;;-webkit-text-stroke:0.22px currentColor;">15</div>
<div class="t" style="left:3.96px;top:354.10px;font-size:9.8px;color:#505050;transform:scaleX(0.8500);transform-origin:0 0;;-webkit-text-stroke:0.22px currentColor;">16</div>
<div class="t" style="left:3.96px;top:367.48px;font-size:9.8px;color:#505050;transform:scaleX(0.8500);transform-origin:0 0;;-webkit-text-stroke:0.22px currentColor;">17</div>
<div class="t" style="left:3.96px;top:380.86px;font-size:9.8px;color:#505050;transform:scaleX(0.8500);transform-origin:0 0;;-webkit-text-stroke:0.22px currentColor;">18</div>
<div class="t" style="left:3.96px;top:394.24px;font-size:9.8px;color:#505050;transform:scaleX(0.8500);transform-origin:0 0;;-webkit-text-stroke:0.22px currentColor;">19</div>
<div class="t" style="left:3.96px;top:407.62px;font-size:9.8px;color:#505050;transform:scaleX(0.8500);transform-origin:0 0;;-webkit-text-stroke:0.22px currentColor;">20</div>
<div class="t" style="left:3.96px;top:421.00px;font-size:9.8px;color:#505050;transform:scaleX(0.8500);transform-origin:0 0;;-webkit-text-stroke:0.22px currentColor;">21</div>
<div class="t" style="left:3.96px;top:434.38px;font-size:9.8px;color:#505050;transform:scaleX(0.8500);transform-origin:0 0;;-webkit-text-stroke:0.22px currentColor;">22</div>
<div class="t" style="left:3.96px;top:447.76px;font-size:9.8px;color:#505050;transform:scaleX(0.8500);transform-origin:0 0;;-webkit-text-stroke:0.22px currentColor;">23</div>
<div class="t" style="left:24.70px;top:154.08px;font-size:9px;color:#ffffff;font-weight:700;transform:scaleX(0.9740);transform-origin:0 0;;-webkit-text-stroke:0.22px currentColor;">Números</div>
<div class="t" style="left:60.20px;top:166.68px;font-size:9.8px;color:#2a2a2a;transform:scaleX(0.7519);transform-origin:0 0;;-webkit-text-stroke:0.22px currentColor;">74</div>
<div class="t" style="left:87.85px;top:166.92px;font-size:9.4px;color:#2e2e2e;transform:scaleX(0.8434);transform-origin:0 0;;-webkit-text-stroke:0.22px currentColor;">FALSO</div>
<div class="t" style="left:60.20px;top:180.06px;font-size:9.8px;color:#2a2a2a;transform:scaleX(0.7519);transform-origin:0 0;;-webkit-text-stroke:0.22px currentColor;">96</div>
<div class="t" style="left:87.85px;top:180.30px;font-size:9.4px;color:#2e2e2e;transform:scaleX(0.8434);transform-origin:0 0;;-webkit-text-stroke:0.22px currentColor;">FALSO</div>
<div class="t" style="left:60.20px;top:193.44px;font-size:9.8px;color:#2a2a2a;transform:scaleX(0.7519);transform-origin:0 0;;-webkit-text-stroke:0.22px currentColor;">88</div>
<div class="t" style="left:87.85px;top:193.68px;font-size:9.4px;color:#2e2e2e;transform:scaleX(0.8434);transform-origin:0 0;;-webkit-text-stroke:0.22px currentColor;">FALSO</div>
<div class="t" style="left:60.20px;top:206.82px;font-size:9.8px;color:#2a2a2a;transform:scaleX(0.7519);transform-origin:0 0;;-webkit-text-stroke:0.22px currentColor;">84</div>
<div class="t" style="left:87.85px;top:207.06px;font-size:9.4px;color:#2e2e2e;transform:scaleX(0.8434);transform-origin:0 0;;-webkit-text-stroke:0.22px currentColor;">FALSO</div>
<div class="t" style="left:60.20px;top:220.20px;font-size:9.8px;color:#2a2a2a;transform:scaleX(0.7519);transform-origin:0 0;;-webkit-text-stroke:0.22px currentColor;">51</div>
<div class="t" style="left:75.10px;top:220.44px;font-size:9.4px;color:#2e2e2e;transform:scaleX(0.8587);transform-origin:0 0;;-webkit-text-stroke:0.22px currentColor;">VERDADERO</div>
<div class="t" style="left:60.20px;top:233.58px;font-size:9.8px;color:#2a2a2a;transform:scaleX(0.7519);transform-origin:0 0;;-webkit-text-stroke:0.22px currentColor;">83</div>
<div class="t" style="left:75.10px;top:233.82px;font-size:9.4px;color:#2e2e2e;transform:scaleX(0.8587);transform-origin:0 0;;-webkit-text-stroke:0.22px currentColor;">VERDADERO</div>
<div class="t" style="left:60.20px;top:246.96px;font-size:9.8px;color:#2a2a2a;transform:scaleX(0.7519);transform-origin:0 0;;-webkit-text-stroke:0.22px currentColor;">50</div>
<div class="t" style="left:87.85px;top:247.20px;font-size:9.4px;color:#2e2e2e;transform:scaleX(0.8434);transform-origin:0 0;;-webkit-text-stroke:0.22px currentColor;">FALSO</div>
<div class="t" style="left:60.20px;top:260.34px;font-size:9.8px;color:#2a2a2a;transform:scaleX(0.7519);transform-origin:0 0;;-webkit-text-stroke:0.22px currentColor;">76</div>
<div class="t" style="left:87.85px;top:260.58px;font-size:9.4px;color:#2e2e2e;transform:scaleX(0.8434);transform-origin:0 0;;-webkit-text-stroke:0.22px currentColor;">FALSO</div>
<div class="t" style="left:60.20px;top:273.72px;font-size:9.8px;color:#2a2a2a;transform:scaleX(0.7519);transform-origin:0 0;;-webkit-text-stroke:0.22px currentColor;">97</div>
<div class="t" style="left:75.10px;top:273.96px;font-size:9.4px;color:#2e2e2e;transform:scaleX(0.8587);transform-origin:0 0;;-webkit-text-stroke:0.22px currentColor;">VERDADERO</div>
<div class="t" style="left:60.20px;top:287.10px;font-size:9.8px;color:#2a2a2a;transform:scaleX(0.7519);transform-origin:0 0;;-webkit-text-stroke:0.22px currentColor;">67</div>
<div class="t" style="left:75.10px;top:287.34px;font-size:9.4px;color:#2e2e2e;transform:scaleX(0.8587);transform-origin:0 0;;-webkit-text-stroke:0.22px currentColor;">VERDADERO</div>
<div class="t" style="left:60.20px;top:300.48px;font-size:9.8px;color:#2a2a2a;transform:scaleX(0.7519);transform-origin:0 0;;-webkit-text-stroke:0.22px currentColor;">58</div>
<div class="t" style="left:87.85px;top:300.72px;font-size:9.4px;color:#2e2e2e;transform:scaleX(0.8434);transform-origin:0 0;;-webkit-text-stroke:0.22px currentColor;">FALSO</div>
<div class="t" style="left:60.20px;top:313.86px;font-size:9.8px;color:#2a2a2a;transform:scaleX(0.7519);transform-origin:0 0;;-webkit-text-stroke:0.22px currentColor;">98</div>
<div class="t" style="left:87.85px;top:314.10px;font-size:9.4px;color:#2e2e2e;transform:scaleX(0.8434);transform-origin:0 0;;-webkit-text-stroke:0.22px currentColor;">FALSO</div>
<div class="t" style="left:60.20px;top:327.24px;font-size:9.8px;color:#2a2a2a;transform:scaleX(0.7519);transform-origin:0 0;;-webkit-text-stroke:0.22px currentColor;">53</div>
<div class="t" style="left:75.10px;top:327.48px;font-size:9.4px;color:#2e2e2e;transform:scaleX(0.8587);transform-origin:0 0;;-webkit-text-stroke:0.22px currentColor;">VERDADERO</div>
<div class="t" style="left:60.20px;top:340.62px;font-size:9.8px;color:#2a2a2a;transform:scaleX(0.7519);transform-origin:0 0;;-webkit-text-stroke:0.22px currentColor;">80</div>
<div class="t" style="left:87.85px;top:340.86px;font-size:9.4px;color:#2e2e2e;transform:scaleX(0.8434);transform-origin:0 0;;-webkit-text-stroke:0.22px currentColor;">FALSO</div>
<div class="t" style="left:60.20px;top:354.00px;font-size:9.8px;color:#2a2a2a;transform:scaleX(0.7519);transform-origin:0 0;;-webkit-text-stroke:0.22px currentColor;">79</div>
<div class="t" style="left:75.10px;top:354.24px;font-size:9.4px;color:#2e2e2e;transform:scaleX(0.8587);transform-origin:0 0;;-webkit-text-stroke:0.22px currentColor;">VERDADERO</div>
<div class="t" style="left:60.20px;top:367.38px;font-size:9.8px;color:#2a2a2a;transform:scaleX(0.7519);transform-origin:0 0;;-webkit-text-stroke:0.22px currentColor;">50</div>
<div class="t" style="left:87.85px;top:367.62px;font-size:9.4px;color:#2e2e2e;transform:scaleX(0.8434);transform-origin:0 0;;-webkit-text-stroke:0.22px currentColor;">FALSO</div>
<div class="t" style="left:60.20px;top:380.76px;font-size:9.8px;color:#2a2a2a;transform:scaleX(0.7519);transform-origin:0 0;;-webkit-text-stroke:0.22px currentColor;">58</div>
<div class="t" style="left:87.85px;top:381.00px;font-size:9.4px;color:#2e2e2e;transform:scaleX(0.8434);transform-origin:0 0;;-webkit-text-stroke:0.22px currentColor;">FALSO</div>
<div class="t" style="left:60.20px;top:394.14px;font-size:9.8px;color:#2a2a2a;transform:scaleX(0.7519);transform-origin:0 0;;-webkit-text-stroke:0.22px currentColor;">65</div>
<div class="t" style="left:75.10px;top:394.38px;font-size:9.4px;color:#2e2e2e;transform:scaleX(0.8587);transform-origin:0 0;;-webkit-text-stroke:0.22px currentColor;">VERDADERO</div>
<div class="t" style="left:60.20px;top:407.52px;font-size:9.8px;color:#2a2a2a;transform:scaleX(0.7519);transform-origin:0 0;;-webkit-text-stroke:0.22px currentColor;">70</div>
<div class="t" style="left:87.85px;top:407.76px;font-size:9.4px;color:#2e2e2e;transform:scaleX(0.8434);transform-origin:0 0;;-webkit-text-stroke:0.22px currentColor;">FALSO</div>
<div class="t" style="left:60.20px;top:420.90px;font-size:9.8px;color:#2a2a2a;transform:scaleX(0.7519);transform-origin:0 0;;-webkit-text-stroke:0.22px currentColor;">90</div>
<div class="t" style="left:87.85px;top:421.14px;font-size:9.4px;color:#2e2e2e;transform:scaleX(0.8434);transform-origin:0 0;;-webkit-text-stroke:0.22px currentColor;">FALSO</div>
<div class="t" style="left:173.60px;top:154.42px;font-size:8.6px;color:#1e1e1e;font-weight:700;transform:scaleX(0.9919);transform-origin:0 0;;-webkit-text-stroke:0.22px currentColor;">Mayores a 90:</div>
<div class="t" style="left:134.60px;top:167.80px;font-size:8.6px;color:#1e1e1e;font-weight:700;transform:scaleX(0.9888);transform-origin:0 0;;-webkit-text-stroke:0.22px currentColor;">Mayores o iguales a 90:</div>
<div class="t" style="left:131.70px;top:181.18px;font-size:8.6px;color:#1e1e1e;font-weight:700;transform:scaleX(0.9829);transform-origin:0 0;;-webkit-text-stroke:0.22px currentColor;">Mayores o iguales a F1:</div>
<div class="t" style="left:153.60px;top:194.56px;font-size:8.6px;color:#1e1e1e;font-weight:700;transform:scaleX(1.0017);transform-origin:0 0;;-webkit-text-stroke:0.22px currentColor;">Números impares:</div>
<div class="t" style="left:278.05px;top:153.20px;font-size:9.8px;color:#2a2a2a;;-webkit-text-stroke:0.22px currentColor;">3</div>
<div class="t" style="left:278.05px;top:166.58px;font-size:9.8px;color:#2a2a2a;;-webkit-text-stroke:0.22px currentColor;">4</div>
<div class="t" style="left:273.50px;top:179.96px;font-size:9.8px;color:#2a2a2a;transform:scaleX(0.8986);transform-origin:0 0;;-webkit-text-stroke:0.22px currentColor;">12</div>
<div class="t" style="left:381.50px;top:153.20px;font-size:9.8px;color:#2a2a2a;transform:scaleX(0.8986);transform-origin:0 0;;-webkit-text-stroke:0.22px currentColor;">70</div>
<div class="a" style="left:69.8px;top:164.28px;width:61px;height:268.60px;border:1px solid #4d7ed0"></div>
<div class="a" style="left:68.8px;top:163.28px;width:3px;height:3px;background:#4d7ed0;"></div>
<div class="a" style="left:128.8px;top:163.28px;width:3px;height:3px;background:#4d7ed0;"></div>
<div class="a" style="left:68.8px;top:430.88px;width:3px;height:3px;background:#4d7ed0;"></div>
<div class="a" style="left:128.8px;top:430.88px;width:3px;height:3px;background:#4d7ed0;"></div>
<div class="a" style="left:230.2px;top:191.84000000000003px;width:100px;height:13.08px;background:#fefdfe;"></div>
<div class="a" style="left:230px;top:191.04px;width:56px;height:14.68px;border:1.6px solid #2f6f4a;border-right:none"></div>
<div class="t" style="left:233.50px;top:194.62px;font-size:9px;color:#1a1a1a;transform:scaleX(0.9241);transform-origin:0 0;-webkit-text-stroke:0.45px currentColor">=CONTAR.SI(</div>
<div class="t" style="left:286.80px;top:194.62px;font-size:9px;color:#6a8ecb;transform:scaleX(0.8974);transform-origin:0 0;-webkit-text-stroke:0.35px currentColor">B2:B21</div>
<div class="t" style="left:313.40px;top:194.62px;font-size:9px;color:#1a1a1a;transform:scaleX(0.9512);transform-origin:0 0;-webkit-text-stroke:0.45px currentColor">,V</div>
<div class="a" style="left:283px;top:202.42000000000002px;width:3.5px;height:3px;background:#2f6f4a;"></div>
<div class="a" style="left:322.3px;top:193.54000000000002px;width:0.9px;height:10.5px;background:#222;"></div>
<div class="a" style="left:238.3px;top:207.2px;width:104.4px;height:10.7px;background:#fdfcfd;border:1px solid #cfcdcf"></div>
<div class="t" style="left:242.00px;top:207.65px;font-size:8.8px;color:#6a6a6a;transform:scaleX(0.8719);transform-origin:0 0;;-webkit-text-stroke:0.22px currentColor;">CONTAR.SI(rango, <b style="color:#3a3a3a">criterio</b>)</div>
<div class="a" style="left:316.7px;top:217.5px;width:95px;height:138px;background:#fdfcfd;border:1px solid #a9a7a9;box-shadow:1px 1px 1px rgba(0,0,0,0.08)"></div>
<div class="a" style="left:400.6px;top:218.5px;width:10.4px;height:136px;background:#f0eef0;"></div>
<div class="a" style="left:401.5px;top:229.5px;width:9px;height:85px;background:#c7c5c7;"></div>
<svg class="a" style="left:402px;top:221px;" width="8" height="6" viewBox="0 0 8 6"><path d="M1.2 4.6l2.8-2.8 2.8 2.8" fill="none" stroke="#333" stroke-width="1.3"/></svg>
<svg class="a" style="left:402px;top:346.5px;" width="8" height="6" viewBox="0 0 8 6"><path d="M1.2 1.4l2.8 2.8 2.8-2.8" fill="none" stroke="#333" stroke-width="1.3"/></svg>
<div class="a" style="left:330px;top:218.9px;width:69.7px;height:11px;background:#0a74d4;"></div>
<svg class="a" style="left:318.8px;top:218.79999999999998px;" width="11.5" height="11" viewBox="0 0 11.5 11"><circle cx="5.6" cy="5.5" r="4.9" fill="none" stroke="#333" stroke-width="0.9"/><path d="M6.3 2.3c-0.9-0.3-1.5 0.1-1.7 0.9L3.6 8.2c-0.2 0.8-0.7 1-1.3 0.9M3.4 4.4h2.4" fill="none" stroke="#333" stroke-width="0.8"/><path d="M5.6 5.8l2.4 2.6M8 5.8L5.6 8.4" fill="none" stroke="#333" stroke-width="0.75"/></svg>
<div class="t" style="left:331.70px;top:220.41px;font-size:7.9px;color:#ffffff;transform:scaleX(0.8850);transform-origin:0 0;-webkit-text-stroke:0.25px currentColor">VA</div>
<svg class="a" style="left:318.8px;top:230.14999999999998px;" width="11.5" height="11" viewBox="0 0 11.5 11"><circle cx="5.6" cy="5.5" r="4.9" fill="none" stroke="#333" stroke-width="0.9"/><path d="M6.3 2.3c-0.9-0.3-1.5 0.1-1.7 0.9L3.6 8.2c-0.2 0.8-0.7 1-1.3 0.9M3.4 4.4h2.4" fill="none" stroke="#333" stroke-width="0.8"/><path d="M5.6 5.8l2.4 2.6M8 5.8L5.6 8.4" fill="none" stroke="#333" stroke-width="0.75"/></svg>
<div class="t" style="left:331.70px;top:231.76px;font-size:7.9px;color:#333333;transform:scaleX(0.8850);transform-origin:0 0;-webkit-text-stroke:0.25px currentColor">VALOR</div>
<svg class="a" style="left:318.8px;top:241.49999999999997px;" width="11.5" height="11" viewBox="0 0 11.5 11"><circle cx="5.6" cy="5.5" r="4.9" fill="none" stroke="#333" stroke-width="0.9"/><path d="M6.3 2.3c-0.9-0.3-1.5 0.1-1.7 0.9L3.6 8.2c-0.2 0.8-0.7 1-1.3 0.9M3.4 4.4h2.4" fill="none" stroke="#333" stroke-width="0.8"/><path d="M5.6 5.8l2.4 2.6M8 5.8L5.6 8.4" fill="none" stroke="#333" stroke-width="0.75"/></svg>
<div class="t" style="left:331.70px;top:243.11px;font-size:7.9px;color:#333333;transform:scaleX(0.8850);transform-origin:0 0;-webkit-text-stroke:0.25px currentColor">VALOR.NUMERO</div>
<svg class="a" style="left:318.8px;top:252.85px;" width="11.5" height="11" viewBox="0 0 11.5 11"><circle cx="5.6" cy="5.5" r="4.9" fill="none" stroke="#333" stroke-width="0.9"/><path d="M6.3 2.3c-0.9-0.3-1.5 0.1-1.7 0.9L3.6 8.2c-0.2 0.8-0.7 1-1.3 0.9M3.4 4.4h2.4" fill="none" stroke="#333" stroke-width="0.8"/><path d="M5.6 5.8l2.4 2.6M8 5.8L5.6 8.4" fill="none" stroke="#333" stroke-width="0.75"/></svg>
<div class="t" style="left:331.70px;top:254.46px;font-size:7.9px;color:#333333;transform:scaleX(0.8850);transform-origin:0 0;-webkit-text-stroke:0.25px currentColor">VALORATEXTO</div>
<svg class="a" style="left:318.8px;top:264.2px;" width="11.5" height="11" viewBox="0 0 11.5 11"><circle cx="5.6" cy="5.5" r="4.9" fill="none" stroke="#333" stroke-width="0.9"/><path d="M6.3 2.3c-0.9-0.3-1.5 0.1-1.7 0.9L3.6 8.2c-0.2 0.8-0.7 1-1.3 0.9M3.4 4.4h2.4" fill="none" stroke="#333" stroke-width="0.8"/><path d="M5.6 5.8l2.4 2.6M8 5.8L5.6 8.4" fill="none" stroke="#333" stroke-width="0.75"/></svg>
<div class="t" style="left:331.70px;top:265.81px;font-size:7.9px;color:#333333;transform:scaleX(0.8850);transform-origin:0 0;-webkit-text-stroke:0.25px currentColor">VALORCUBO</div>
<svg class="a" style="left:318.8px;top:275.55px;" width="11.5" height="11" viewBox="0 0 11.5 11"><circle cx="5.6" cy="5.5" r="4.9" fill="none" stroke="#333" stroke-width="0.9"/><path d="M6.3 2.3c-0.9-0.3-1.5 0.1-1.7 0.9L3.6 8.2c-0.2 0.8-0.7 1-1.3 0.9M3.4 4.4h2.4" fill="none" stroke="#333" stroke-width="0.8"/><path d="M5.6 5.8l2.4 2.6M8 5.8L5.6 8.4" fill="none" stroke="#333" stroke-width="0.75"/></svg>
<div class="t" style="left:331.70px;top:277.16px;font-size:7.9px;color:#333333;transform:scaleX(0.8850);transform-origin:0 0;-webkit-text-stroke:0.25px currentColor">VAR.P</div>
<svg class="a" style="left:318.8px;top:286.9px;" width="11.5" height="11" viewBox="0 0 11.5 11"><circle cx="5.6" cy="5.5" r="4.9" fill="none" stroke="#333" stroke-width="0.9"/><path d="M6.3 2.3c-0.9-0.3-1.5 0.1-1.7 0.9L3.6 8.2c-0.2 0.8-0.7 1-1.3 0.9M3.4 4.4h2.4" fill="none" stroke="#333" stroke-width="0.8"/><path d="M5.6 5.8l2.4 2.6M8 5.8L5.6 8.4" fill="none" stroke="#333" stroke-width="0.75"/></svg>
<div class="t" style="left:331.70px;top:288.51px;font-size:7.9px;color:#333333;transform:scaleX(0.8850);transform-origin:0 0;-webkit-text-stroke:0.25px currentColor">VAR.S</div>
<svg class="a" style="left:318.8px;top:298.25px;" width="11.5" height="11" viewBox="0 0 11.5 11"><circle cx="5.6" cy="5.5" r="4.9" fill="none" stroke="#333" stroke-width="0.9"/><path d="M6.3 2.3c-0.9-0.3-1.5 0.1-1.7 0.9L3.6 8.2c-0.2 0.8-0.7 1-1.3 0.9M3.4 4.4h2.4" fill="none" stroke="#333" stroke-width="0.8"/><path d="M5.6 5.8l2.4 2.6M8 5.8L5.6 8.4" fill="none" stroke="#333" stroke-width="0.75"/></svg>
<div class="t" style="left:331.70px;top:299.86px;font-size:7.9px;color:#333333;transform:scaleX(0.8850);transform-origin:0 0;-webkit-text-stroke:0.25px currentColor">VARA</div>
<svg class="a" style="left:318.8px;top:309.6px;" width="11.5" height="11" viewBox="0 0 11.5 11"><circle cx="5.6" cy="5.5" r="4.9" fill="none" stroke="#333" stroke-width="0.9"/><path d="M6.3 2.3c-0.9-0.3-1.5 0.1-1.7 0.9L3.6 8.2c-0.2 0.8-0.7 1-1.3 0.9M3.4 4.4h2.4" fill="none" stroke="#333" stroke-width="0.8"/><path d="M5.6 5.8l2.4 2.6M8 5.8L5.6 8.4" fill="none" stroke="#333" stroke-width="0.75"/></svg>
<div class="t" style="left:331.70px;top:311.21px;font-size:7.9px;color:#333333;transform:scaleX(0.8850);transform-origin:0 0;-webkit-text-stroke:0.25px currentColor">VARPA</div>
<svg class="a" style="left:318.8px;top:320.95px;" width="11.5" height="11" viewBox="0 0 11.5 11"><circle cx="5.6" cy="5.5" r="4.9" fill="none" stroke="#333" stroke-width="0.9"/><path d="M6.3 2.3c-0.9-0.3-1.5 0.1-1.7 0.9L3.6 8.2c-0.2 0.8-0.7 1-1.3 0.9M3.4 4.4h2.4" fill="none" stroke="#333" stroke-width="0.8"/><path d="M5.6 5.8l2.4 2.6M8 5.8L5.6 8.4" fill="none" stroke="#333" stroke-width="0.75"/></svg>
<div class="t" style="left:331.70px;top:322.56px;font-size:7.9px;color:#333333;transform:scaleX(0.8850);transform-origin:0 0;-webkit-text-stroke:0.25px currentColor">VERDADERO</div>
<svg class="a" style="left:318.8px;top:332.3px;" width="11.5" height="11" viewBox="0 0 11.5 11"><circle cx="5.6" cy="5.5" r="4.9" fill="none" stroke="#333" stroke-width="0.9"/><path d="M6.3 2.3c-0.9-0.3-1.5 0.1-1.7 0.9L3.6 8.2c-0.2 0.8-0.7 1-1.3 0.9M3.4 4.4h2.4" fill="none" stroke="#333" stroke-width="0.8"/><path d="M5.6 5.8l2.4 2.6M8 5.8L5.6 8.4" fill="none" stroke="#333" stroke-width="0.75"/></svg>
<div class="t" style="left:331.70px;top:333.91px;font-size:7.9px;color:#333333;transform:scaleX(0.8850);transform-origin:0 0;-webkit-text-stroke:0.25px currentColor">VF</div>
<svg class="a" style="left:318.8px;top:343.65px;" width="11.5" height="11" viewBox="0 0 11.5 11"><circle cx="5.6" cy="5.5" r="4.9" fill="none" stroke="#333" stroke-width="0.9"/><path d="M6.3 2.3c-0.9-0.3-1.5 0.1-1.7 0.9L3.6 8.2c-0.2 0.8-0.7 1-1.3 0.9M3.4 4.4h2.4" fill="none" stroke="#333" stroke-width="0.8"/><path d="M5.6 5.8l2.4 2.6M8 5.8L5.6 8.4" fill="none" stroke="#333" stroke-width="0.75"/></svg>
<div class="t" style="left:331.70px;top:345.26px;font-size:7.9px;color:#333333;transform:scaleX(0.8850);transform-origin:0 0;-webkit-text-stroke:0.25px currentColor">VF.PLAN</div>
<div class="a" style="left:415.5px;top:217.9px;width:369.6px;height:11.8px;background:#fdfcfd;border:1px solid #cfcdcf;box-shadow:0.5px 1.2px 1.2px rgba(0,0,0,0.12)"></div>
<div class="t" style="left:418.00px;top:218.96px;font-size:8.2px;color:#505050;transform:scaleX(0.9571);transform-origin:0 0;-webkit-text-stroke:0.1px currentColor">Devuelve el valor presente de una inversión: la suma total del valor actual de una serie de pagos futuros</div>
<svg class="a" style="left:322.5px;top:382.6px;" width="13" height="13" viewBox="0 0 13 13"><path d="M4.3 1h3.6v3.3h3.4v3.6H7.9v3.4H4.3V7.9H1V4.3h3.3z" fill="#fff" stroke="#222" stroke-width="1.25" stroke-linejoin="round"/></svg>
</div></body></html>
